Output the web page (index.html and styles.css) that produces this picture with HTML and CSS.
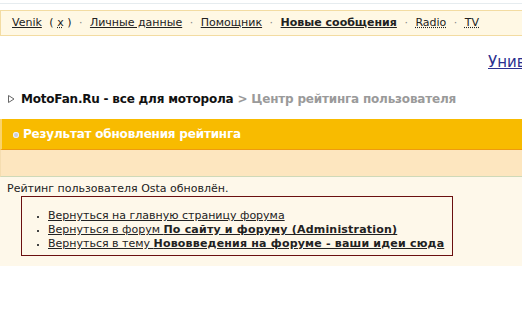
FILE: index.html
```html
<!DOCTYPE html>
<html lang="ru">
<head>
    <meta charset="UTF-8">
    <title>MotoFan.Ru - Центр рейтинга пользователя</title>
    <link rel="stylesheet" href="styles.css">
</head>
<body>
    <div class="page">
        <div class="topline"></div>

        <div class="userbar">
            <a href="#">Venik</a>
            <span class="paren">(&nbsp;<a href="#" class="dotted">x</a>&nbsp;)</span>
            <span class="sep">·</span>
            <a href="#">Личные данные</a>
            <span class="sep">·</span>
            <a href="#">Помощник</a>
            <span class="sep">·</span>
            <a href="#" class="strong">Новые сообщения</a>
            <span class="sep">·</span>
            <a href="#" class="dotted">Radio</a>
            <span class="sep">·</span>
            <a href="#" class="dotted">TV</a>
        </div>

        <div class="banner">
            <a href="#">Универсальный магазин</a>
        </div>

        <div class="navstrip">
            <svg class="arrow" width="7" height="8" viewBox="0 0 7 8">
                <path d="M0.5 0.5 L6 4 L0.5 7.5 Z" fill="none" stroke="#666" stroke-width="1"/>
            </svg>
            <a href="#">MotoFan.Ru - все для моторола</a>
            <span class="crumb">&gt; Центр рейтинга пользователя</span>
        </div>

        <div class="tableborder">
            <div class="maintitle">
                <span class="dot"></span>Результат обновления рейтинга
            </div>
            <div class="pformstrip"></div>
            <div class="tablepad">
                <div class="message">Рейтинг пользователя Osta обновлён.</div>
                <div class="linkbox">
                    <ul>
                        <li><a href="#">Вернуться на главную страницу форума</a></li>
                        <li><a href="#">Вернуться в форум <b>По сайту и форуму (Administration)</b></a></li>
                        <li><a href="#">Вернуться в тему <b>Нововведения на форуме - ваши идеи сюда</b></a></li>
                    </ul>
                </div>
            </div>
        </div>
    </div>
</body>
</html>
```

FILE: styles.css
```css
/* Base */
html, body {
    margin: 0;
    padding: 0;
    background: #fff;
    overflow: hidden;
}

body {
    font-family: 'DejaVu Sans', Verdana, sans-serif;
    font-size: 11px;
    color: #222;
}

a {
    color: #222;
}

.page {
    width: 600px;
}

.topline {
    height: 1px;
    margin-top: 3px;
    background: #e6ecef;
}

/* User bar */
.userbar {
    margin-top: 6px;
    height: 24px;
    line-height: 24px;
    padding-left: 11px;
    background: #fff8e4;
    border: 1px solid #f3dca2;
    border-right: none;
    white-space: nowrap;
}

.userbar a {
    color: #222;
}

.userbar .strong {
    font-weight: bold;
}

.userbar .dotted {
    text-decoration: underline dotted;
}

.paren {
    margin-left: 4px;
}

.sep {
    color: #888;
    margin: 0 4px;
}

/* Banner link */
.banner {
    height: 38px;
    padding-top: 17px;
    padding-left: 488px;
    line-height: 18px;
    white-space: nowrap;
    font-size: 15px;
}

.banner a {
    color: #2a2f8f;
}

/* Breadcrumbs */
.navstrip {
    padding-left: 8px;
    height: 16px;
    font-size: 12px;
    font-weight: bold;
    line-height: 16px;
    letter-spacing: -0.2px;
    white-space: nowrap;
}

.navstrip .arrow {
    margin-right: 2px;
    vertical-align: 0;
}

.navstrip a {
    color: #111;
    text-decoration: none;
}

.navstrip .crumb {
    color: #9a9a9a;
}

/* Result table */
.tableborder {
    margin-top: 12px;
}

.maintitle {
    height: 30px;
    line-height: 31px;
    padding-left: 11px;
    background: #f8bb00;
    border-bottom: 1px solid #ee9a10;
    border-left: 2px solid #fbd36a;
    color: #fff;
    font-size: 12px;
    font-weight: bold;
    letter-spacing: -0.2px;
    white-space: nowrap;
}

.dot {
    display: inline-block;
    width: 6px;
    height: 6px;
    margin-right: 4px;
    border-radius: 50%;
    background: #c8ccd8;
    box-shadow: inset 0 0 0 1px #f2f2f2;
    vertical-align: 0;
}

.pformstrip {
    height: 26px;
    background: #fde6bf;
    border-left: 1px solid #f5ddb0;
    border-bottom: 1px solid #cfd9b8;
}

.tablepad {
    background: #fef8ea;
    padding: 5px 0 10px 7px;
}

.message {
    line-height: 14px;
}

.linkbox {
    width: max-content;
    margin-left: 14px;
    border: 1px solid #6b1010;
    padding: 12px 8px 4px 0;
}

.linkbox ul {
    margin: 0;
    padding-left: 26px;
    list-style: square;
}

.linkbox li {
    line-height: 14px;
}

.linkbox li b {
    letter-spacing: 0.2px;
}

.linkbox li::marker {
    color: #444;
    font-size: 8px;
}
```
